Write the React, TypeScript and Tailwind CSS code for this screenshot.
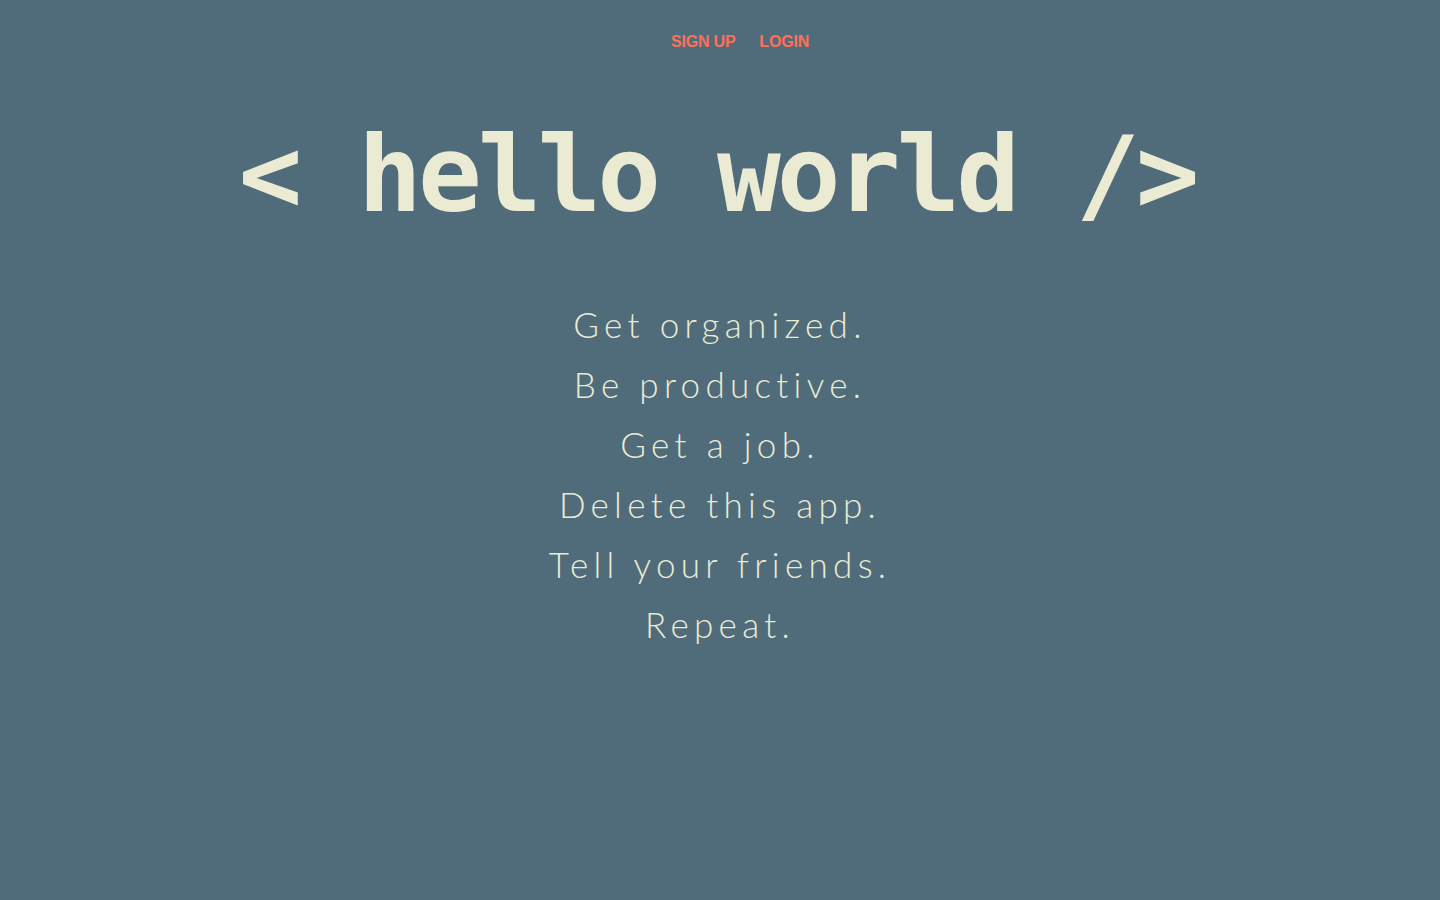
export default function App() {
  const lines = [
    "Get organized.",
    "Be productive.",
    "Get a job.",
    "Delete this app.",
    "Tell your friends.",
    "Repeat.",
  ];
  return (
    <div className="min-h-[900px] w-full bg-[#506C7B] flex flex-col items-center">
      <nav className="flex gap-6 pt-[32px] pl-10 font-['Liberation_Sans',Arial,sans-serif] font-bold text-[16px] leading-[20px] tracking-[-0.2px] text-[#FF6F59]">
        <a href="#">SIGN UP</a>
        <a href="#">LOGIN</a>
      </nav>
      <h1 className="mt-[63px] pr-[6px] font-['DejaVu_Sans_Mono',monospace] font-bold text-[106px] leading-[120px] tracking-[-4px] text-[#EBEBD3] whitespace-pre">
        {"< hello world />"}
      </h1>
      <div className="mt-[59px] flex flex-col items-center font-['Lato',sans-serif] font-light text-[35px] leading-[60px] tracking-[5.3px] text-[#EBEBD3]">
        {lines.map((l) => (
          <p key={l}>{l}</p>
        ))}
      </div>
    </div>
  );
}
